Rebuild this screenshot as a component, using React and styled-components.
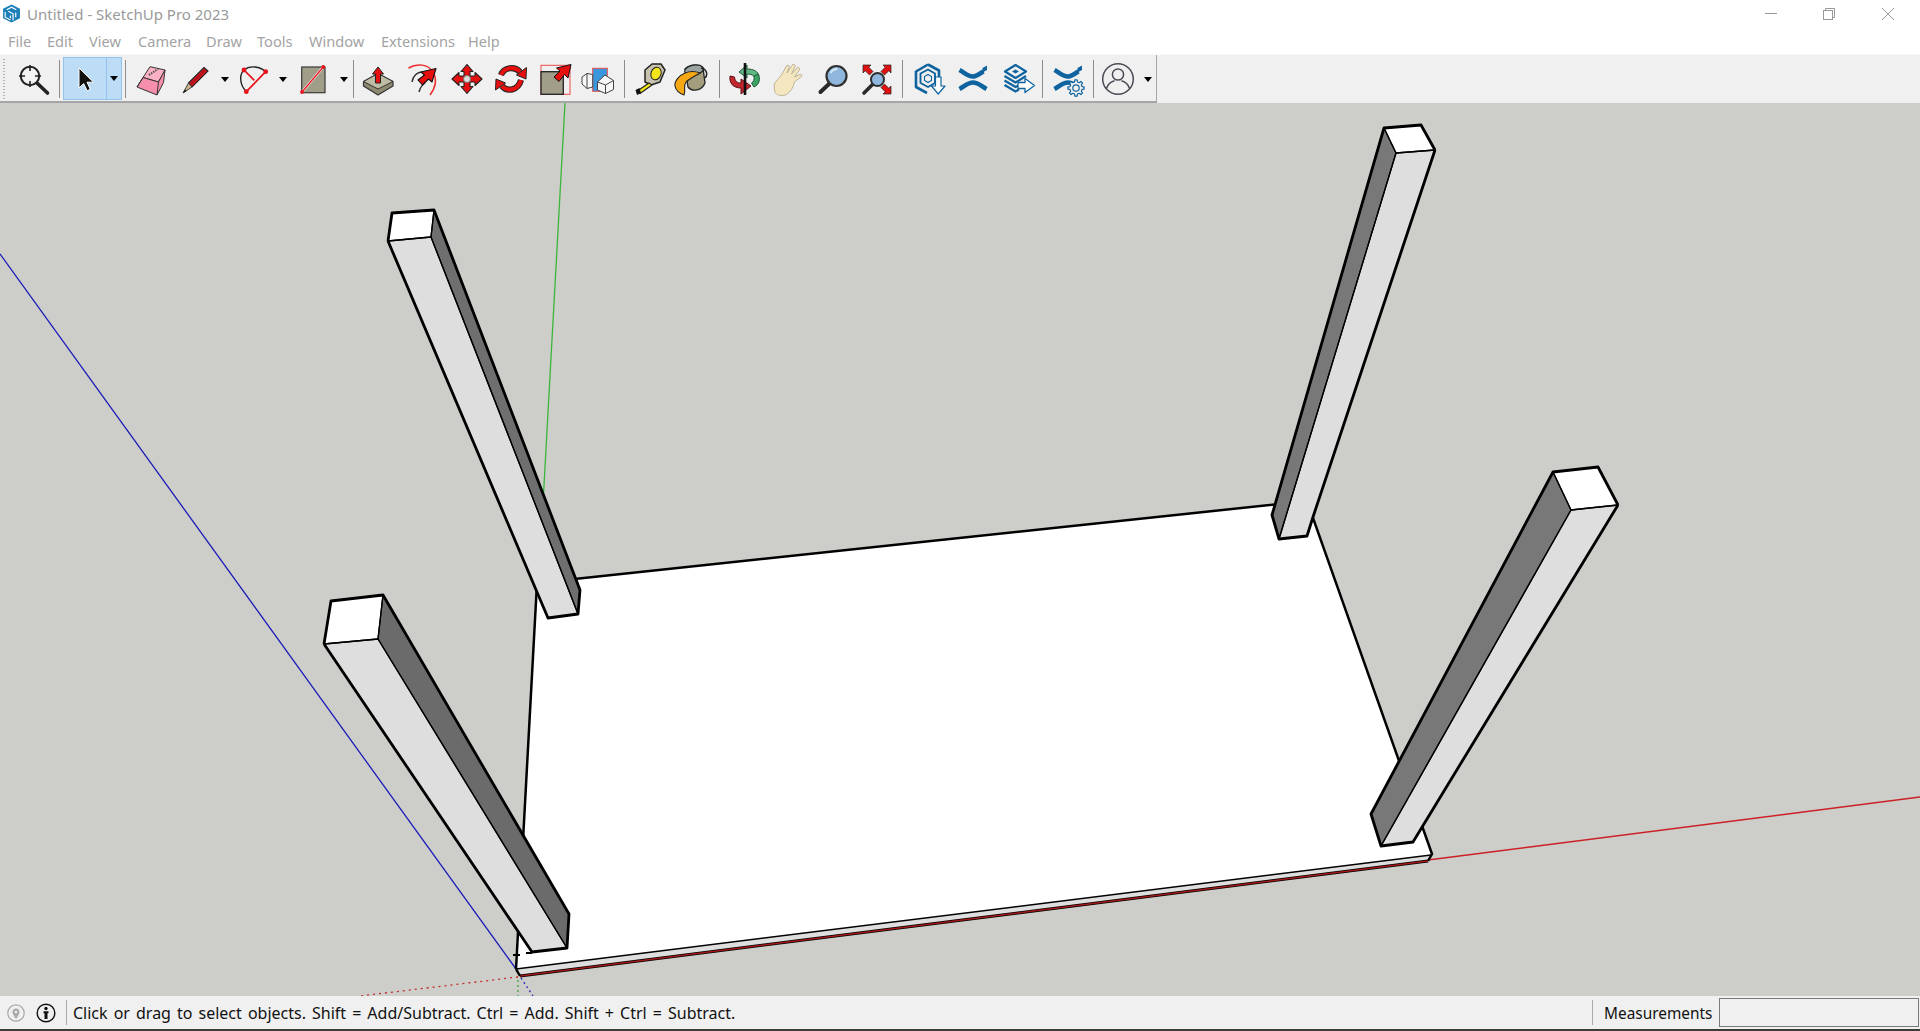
import React from "react";
import styled, { createGlobalStyle } from "styled-components";

const Global = createGlobalStyle`
  html, body { margin: 0; padding: 0; background: #f0f0f0; overflow: hidden; }
  #root { width: 1920px; height: 1031px; }
`;

const FONT = `"Noto Sans", "Open Sans", "Liberation Sans", sans-serif`;

const Shell = styled.div`
  width: 1920px; height: 1031px; display: flex; flex-direction: column;
  font-family: ${FONT}; overflow: hidden; background: #f0f0f0;
`;
const TitleBar = styled.header`
  height: 27px; background: #fff; display: flex; align-items: center; padding-left: 2px; flex: none;
`;
const TitleText = styled.span`
  margin-left: 6px; font-size: 15px; color: #9a9a9a; white-space: nowrap;
`;
const WindowControls = styled.div`
  margin-left: auto; display: flex; height: 27px; align-items: flex-start; padding-right: 3px;
`;
const WindowButton = styled.div`
  width: 58.5px; height: 27px; display: flex; justify-content: center; align-items: flex-start;
  padding-top: 8px; box-sizing: border-box;
`;
const MenuBar = styled.nav`
  height: 27px; background: #fff; display: flex; align-items: center; flex: none; padding: 1px 0 0 8px; box-sizing: border-box;
`;
const MenuItem = styled.span`
  width: ${p => p.$w}px; font-size: 14.6px; color: #a3a3a3; white-space: nowrap;
`;
const ToolRow = styled.div`
  height: 49px; flex: none; background: #f0f0f0; border-top: 1px solid #f8f8f8; box-sizing: border-box;
  display: flex;
`;
const Toolbar = styled.div`
  width: 1157px; height: 48px; display: flex; align-items: center; box-sizing: border-box; padding-top: 2px;
  border-right: 1px solid #a8a8a8; border-bottom: 2px solid #a5a5a5; background: #f0f0f0;
`;
const Grip = styled.div`
  width: 12px; height: 40px; flex: none; box-sizing: border-box; padding-left: 3px;
  &::before {
    content: ""; display: block; width: 2px; height: 40px;
    background: repeating-linear-gradient(to bottom, #b0b0b0 0 1px, transparent 1px 3px);
  }
`;
const Tool = styled.div`
  width: ${p => p.$w}px; height: 44px; flex: none; display: flex; align-items: center; justify-content: center;
`;
const SelectGroup = styled.div`
  width: 59px; height: 43px; flex: none; display: flex; box-sizing: border-box; align-self: flex-start;
  background: #bddcf5; border: 1px solid #91c3ec;
`;
const SelectTool = styled.div`
  width: 43px; display: flex; align-items: center; justify-content: center; border-right: 1px solid #91c3ec;
`;
const Caret = styled.div`
  width: ${p => p.$w}px; flex: none; display: flex; align-items: center; justify-content: center;
  &::before {
    content: ""; border-left: 4.5px solid transparent; border-right: 4.5px solid transparent; border-top: 5px solid #000;
  }
`;
const Sep = styled.div`
  width: 1px; height: 38px; flex: none; background: #8c8c8c;
  margin: 0 3px 0 ${p => 3 + (p.$extra || 0)}px;
`;
const Viewport = styled.main`
  flex: 1; min-height: 0; background: #cdcec9; display: block;
`;
const Scene = styled.svg`
  display: block; width: 1920px; height: 893px;
`;
const StatusBar = styled.footer`
  height: 35px; flex: none; background: #f0f0f0; display: flex; align-items: center; box-sizing: border-box;
  border-bottom: 2px solid #3c3c3c; padding-right: 1px;
`;
const StatusIcon = styled.div`
  width: ${p => p.$w}px; flex: none; display: flex; justify-content: center; align-items: center;
`;
const StatusSep = styled.div`
  width: 1px; height: 25px; flex: none; background: #aaa;
  margin: ${p => p.$m};
`;
const StatusText = styled.span`
  font-size: 16px; word-spacing: 1.9px; color: #111; white-space: nowrap; padding-top: 1px;
`;
const Measure = styled.span`
  margin-left: 11px; font-size: 15.4px; color: #111; white-space: nowrap; width: 115px; flex: none; padding-top: 1px;
`;
const MeasureBox = styled.div`
  width: 200px; height: 29px; flex: none; box-sizing: border-box; border: 1px solid #7a7a7a; background: #f0f0f0;
`;

const Ic = ({ children, s = 36 }) => (
  <svg width={s} height={s} viewBox="0 0 36 36" fill="none">{children}</svg>
);

const RED = "#e60f0f";
const BLUE = "#0f639f";

const IconLens = () => (
  <Ic>
    <circle cx="14" cy="15" r="9.2" stroke="#222" strokeWidth="2" fill="#f4f4f4" />
    <path d="M14 4v6M14 20v6M3 15h6M19 15h6" stroke="#222" strokeWidth="1.6" />
    <path d="M21.5 22.5 31.5 32" stroke="#222" strokeWidth="3.6" strokeLinecap="round" />
  </Ic>
);
const IconArrow = () => (
  <Ic>
    <path d="M12 7v20l4.7-4.4 3.4 7.2 3.2-1.5-3.3-7.1h6.5z" fill="#111" stroke="#fff" strokeWidth="1" />
  </Ic>
);
const IconEraser = () => (
  <Ic>
    <path d="M18 5.7 33 9 26.5 21 11 16.5z" fill="#fbb0c4" stroke="#333" strokeWidth="1" />
    <path d="M11 16.5 26.5 21 33 9 31.5 21.5 25 34 5 26z" fill="#f58fab" stroke="#333" strokeWidth="1" strokeLinejoin="round" />
    <path d="M11 16.5 5 26M26.5 21 25 34" stroke="#333" strokeWidth="1" />
    <path d="M17 14 26 8" stroke="#555" strokeWidth="2" strokeDasharray="1.5 1" />
  </Ic>
);
const IconPencil = () => (
  <Ic>
    <path d="M11.5 22 27 6.5l4 3.5L15 26z" fill="#d9161f" stroke="#222" strokeWidth="1.1" />
    <path d="M13 24 28.5 8.5" stroke="#a8101a" strokeWidth="1.6" />
    <path d="M11.5 22 15 26 6 32z" fill="#c9b48a" stroke="#333" strokeWidth=".9" />
    <path d="M6 32l2-3.5 1.6 1.4z" fill="#111" />
  </Ic>
);
const IconArc = () => (
  <Ic>
    <path d="M10.3 30.7C3 23 3.5 13 8 9c6-5 16-3.500 21.700 1.700" stroke="#222" strokeWidth="1.4" />
    <path d="M8 9 18.300 19.300M29.700 10.700 10.300 30.700" stroke="#e8141c" strokeWidth="1.700" />
    <circle cx="8" cy="9" r="2.400" fill="#e8141c" /><circle cx="29.700" cy="10.700" r="2.400" fill="#e8141c" /><circle cx="10.300" cy="30.700" r="2.400" fill="#e8141c" />
  </Ic>
);
const IconRect = () => (
  <Ic>
    <rect x="6.700" y="6" width="23.300" height="25.700" fill="#a09d88" stroke="#3a3a3a" strokeWidth="1.200" />
    <path d="M28.300 6 7 31" stroke="#fff" strokeWidth="2.600" />
    <path d="M28.300 6 7 31" stroke="#e8141c" strokeWidth="1.300" />
    <circle cx="28.300" cy="6" r="1.900" fill="#e8141c" /><circle cx="7" cy="31" r="1.900" fill="#e8141c" />
  </Ic>
);
const IconPush = () => (
  <Ic>
    <path d="M3.500 20.500 18 12.500 33 20.500 33 25 18 34 3.500 25z" fill="#8e8a72" stroke="#333" strokeWidth="1.200" strokeLinejoin="round" />
    <path d="M3.500 20.500 18 28 33 20.500 18 12.500z" fill="#bfbca6" stroke="#333" strokeWidth="1" strokeLinejoin="round" />
    <path d="M18 6 23.500 13H20.500V22H15.500V13H12.500z" fill={RED} stroke="#222" strokeWidth="1" strokeLinejoin="round" />
  </Ic>
);
const IconOffset = () => (
  <Ic>
    <path d="M3.500 7C12 2 23 3 28 11c4 7 3 15-3 23" stroke="#ee2a2a" strokeWidth="1.500" />
    <path d="M7 21c1-6 5-10 10-10M14 31c1-4 3-7 6-9" stroke="#333" strokeWidth="1.500" />
    <path d="M31 7.500 27 21 23.500 18 17.500 24 13 19 19.500 14 16 11z" fill={RED} stroke="#111" strokeWidth="1.100" strokeLinejoin="round" />
  </Ic>
);
const IconMove = () => (
  <Ic>
    <path d="M18 3.500 24 10.500H21V15H26V11.500L33 18 26 24.500V21H21V25.500H24L18 32.500 12 25.500H15V21H10V24.500L3 18 10 11.500V15H15V10.500H12z" fill={RED} stroke="#222" strokeWidth="1.100" strokeLinejoin="round" />
    <circle cx="18" cy="18" r="3.500" fill="#ddd" stroke="#777" strokeWidth="1" />
  </Ic>
);
const IconRotate = () => (
  <Ic>
    <path d="M8 14C11 6 22 5 27 11" stroke="#222" strokeWidth="6.200" />
    <path d="M28 19C25 30 14 31 9 25" stroke="#222" strokeWidth="6.200" />
    <path d="M8 14C11 6 22 5 27 11" stroke={RED} strokeWidth="4.200" />
    <path d="M28 19C25 30 14 31 9 25" stroke={RED} strokeWidth="4.200" />
    <path d="M33.500 6.500 33 18 23.500 14z" fill={RED} stroke="#222" strokeWidth="1" strokeLinejoin="round" />
    <path d="M2.500 29 3 18 12.500 22z" fill={RED} stroke="#222" strokeWidth="1" strokeLinejoin="round" />
  </Ic>
);
const IconScale = () => (
  <Ic>
    <rect x="4" y="4.300" width="29" height="29" stroke="#ef4a4a" strokeWidth="1" />
    <rect x="4" y="10.700" width="22.300" height="22.600" fill="#a09d88" stroke="#222" strokeWidth="1.300" />
    <path d="M34 3.500 31 17 27.500 13.500 22 20.500 17 16 23 10 19.500 7z" fill={RED} stroke="#111" strokeWidth="1" strokeLinejoin="round" />
  </Ic>
);
const IconSolid = () => (
  <Ic>
    <rect x="12.700" y="7.300" width="14.600" height="23" fill="#3a97dc" stroke="#ea4b4b" strokeWidth="1" />
    <path d="M2 16 7 12.500 12.700 13.500V26L7 27.500 2 23z" fill="#f8f8f8" stroke="#444" strokeWidth="1" strokeLinejoin="round" />
    <path d="M7 12.500V27.500" stroke="#444" strokeWidth="1" />
    <path d="M17.500 21 25 14 33.500 19.500V28.500L25.500 32.500 17.500 29z" fill="#f8f8f8" stroke="#444" strokeWidth="1" strokeLinejoin="round" />
    <path d="M17.500 21 25.500 24 33.500 19.500M25.500 24V32.500" stroke="#444" strokeWidth="1" />
  </Ic>
);
const IconTape = () => (
  <Ic>
    <path d="M13 9 20 3h9l4 6-5 12-9 3-6-3z" fill="#c7c3ae" stroke="#222" strokeWidth="1.500" strokeLinejoin="round" />
    <ellipse cx="24" cy="12.500" rx="5" ry="6.500" fill="#f2e51a" stroke="#222" strokeWidth="1" transform="rotate(20 24 12.500)" />
    <path d="M17 22 6 29.500 8 32.500 20 24z" fill="#f2e51a" stroke="#222" strokeWidth="1.200" strokeLinejoin="round" />
    <path d="M3.500 29 7.500 27 9 32 5 34z" fill="#111" />
  </Ic>
);
const IconPaint = () => (
  <Ic>
    <path d="M13 8C18 3 27 3 31 7L33 22C30 30 20 31 16 26z" fill="#a49e7e" stroke="#222" strokeWidth="1.300" />
    <ellipse cx="22" cy="9" rx="9.500" ry="5" fill="#9aa5a2" stroke="#222" strokeWidth="1.200" transform="rotate(-10 22 9)" />
    <path d="M13 12C8 14 2 20 3 25c1 5 6 8 9 9 2-5-1-9 2-13 3-3 9-6 14-9-5-2-10-2-15 0z" fill="#f5a811" stroke="#222" strokeWidth="1.100" strokeLinejoin="round" />
    <path d="M29 7C35 8 36 14 33 17" stroke="#222" strokeWidth="1.500" />
  </Ic>
);
const IconOrbit = () => (
  <Ic>
    <path d="M4 14C5 9 10 7 16 7L16 3 24 10 16 16V12C12 12 9 13 8 16z" fill="#62b884" stroke="#1d5a38" strokeWidth="1" strokeLinejoin="round" transform="matrix(-1 0 0 1 36 1)" />
    <path d="M3 15C2 22 6 27 14 27V33L24 25 14 18V22C10 22 8 20 7.500 16z" fill="#c1272d" stroke="#5a1316" strokeWidth="1" strokeLinejoin="round" />
    <path d="M31 13C34 18 32 24 27 26L24.500 22C26.500 21 27.500 19 27 15z" fill="#3aa364" stroke="#1d5a38" strokeWidth="1" strokeLinejoin="round" />
    <path d="M18 2V34" stroke="#111" strokeWidth="2.600" />
  </Ic>
);
const IconHand = () => (
  <Ic>
    <path d="M3 24C4 20 8 18 11 13L16 4l2.500 1-2.500 7 6-9 2.500 1.500-4 8.500 6.500-7 2 2-5.500 8 6-3 1.500 2-7.500 6c-1 5-4 10-8 12.500-4 2-9 1-11-1.500-1-2-1.500-4-1-6z" fill="#f4e6bf" stroke="#b8ae90" strokeWidth=".9" strokeLinejoin="round" />
  </Ic>
);
const IconZoom = () => (
  <Ic>
    <path d="M15 22 5.500 31" stroke="#2a2a2a" strokeWidth="4" strokeLinecap="round" />
    <circle cx="21.500" cy="15" r="10" fill="#8fb6dd" stroke="#2f2f2f" strokeWidth="2.200" />
    <path d="M15.500 12c1.500-3 4-4 7-4" stroke="#d5e6f6" strokeWidth="1.800" />
  </Ic>
);
const IconZoomExt = () => (
  <Ic>
    <path d="M14 23 5 32" stroke="#2a2a2a" strokeWidth="3.600" strokeLinecap="round" />
    <circle cx="18.500" cy="18.500" r="6.500" fill="#8fb6dd" stroke="#2f2f2f" strokeWidth="2" />
    <path d="M4 4H12L9.800 6.200 14 10.500 10.500 14 6.200 9.800 4 12zM32 4H24L26.200 6.200 22 10.500 25.500 14 29.800 9.800 32 12zM32 33H24L26.200 30.800 22 26.500 25.500 23 29.800 27.200 32 25z" fill="#e01010" stroke="#222" strokeWidth=".7" />
  </Ic>
);
const IconWarehouse = () => (
  <Ic>
    <path d="M18 3.500 29 9.500V18M17 32 6 26V10.500L18 3.500" stroke={BLUE} strokeWidth="2.600" strokeLinejoin="round" />
    <path d="M18 8.500 25 12.500V22L18 26 10.500 22V12.500z" stroke={BLUE} strokeWidth="1.900" strokeLinejoin="round" />
    <path d="M18 13.500 21.500 15.500V19.500L18 21.500 14.500 19.500V15.500z" stroke={BLUE} strokeWidth="1.100" />
    <path d="M25.500 16H31V25H35L28.200 33 21.500 25H25.500z" fill="#fff" stroke={BLUE} strokeWidth="1.200" strokeLinejoin="round" />
  </Ic>
);
const Chevrons = () => (
  <>
    <path d="M4.500 9C10 12 13 15.500 18 15.500 21 15.500 24 13 28.500 10.500" stroke={BLUE} strokeWidth="4.600" />
    <path d="M4.500 28C10 25 13 21.500 18 21.500 23 21.500 26 25 31.500 28" stroke={BLUE} strokeWidth="4.600" />
    <path d="M27.500 7 32 4.500V9L27.500 11.500z" fill={BLUE} />
  </>
);
const IconExt = () => <Ic><Chevrons /></Ic>;
const IconStack = () => (
  <Ic>
    <path d="M15.500 4 26 10.500 15.500 17 5 10.500z" stroke={BLUE} strokeWidth="2.200" strokeLinejoin="round" />
    <path d="M15.500 8.500 19 10.500 15.500 12.500 12 10.500z" fill={BLUE} />
    <path d="M4.500 15 15.500 21.500 26 15M4.500 19.500 15.500 26 21 23M4.500 24 15.500 30.500 19 28.500" stroke={BLUE} strokeWidth="2.200" />
    <path d="M18 21.500H25V17.500L34.500 24.500 25 31.500V27.500H18z" fill="#fff" stroke={BLUE} strokeWidth="1.300" strokeLinejoin="round" />
  </Ic>
);
const gearPath = (() => {
  const cx = 26, cy = 27, out = 8.2, inn = 6.2, n = 8;
  let d = "";
  for (let i = 0; i < n; i++) {
    const a = (i / n) * Math.PI * 2;
    const step = Math.PI / n;
    const p = (r, t) => `${(cx + r * Math.cos(t)).toFixed(2)} ${(cy + r * Math.sin(t)).toFixed(2)}`;
    d += `${i === 0 ? "M" : "L"}${p(inn, a - step * 0.6)}L${p(out, a - step * 0.35)}L${p(out, a + step * 0.35)}L${p(inn, a + step * 0.6)}`;
  }
  return d + "z";
})();
const IconSettings = () => (
  <Ic>
    <Chevrons />
    <path d={gearPath} fill="#f0f0f0" stroke={BLUE} strokeWidth="1.200" strokeLinejoin="round" />
    <circle cx="26" cy="27" r="3.200" fill="#f0f0f0" stroke={BLUE} strokeWidth="1.200" />
  </Ic>
);
const IconUser = () => (
  <Ic>
    <circle cx="18" cy="18" r="15.300" stroke="#4a4a55" strokeWidth="1.500" />
    <circle cx="18" cy="13.500" r="5.600" stroke="#4a4a55" strokeWidth="1.500" />
    <path d="M6.500 27.500C8 22.500 12 20.500 14.500 19.800M29.500 27.500C28 22.500 24 20.500 21.500 19.800" stroke="#4a4a55" strokeWidth="1.500" />
  </Ic>
);

const Logo = () => (
  <svg width="19" height="19" viewBox="0 0 18 18" fill="none">
    <path d="M1 4.500 9 .5l8 4v9l-8 4-8-4z" fill="#1c7fb8" />
    <path d="M4.500 5.500 9 3l4.500 2.500M3 7.500v5l5 2.700M6 6.800l4.500 2.500v6M13 8v4.500M8 11v2.500" stroke="#fff" strokeWidth="1.100" />
  </svg>
);

const C = ({ w, children }) => <Tool $w={w}>{children}</Tool>;

const pts = a => a.map(p => p.join(",")).join(" ");

const pillars = [
  { dark: "#6f6f6f", light: [[388, 241], [431, 237], [578, 614], [548, 618]], side: [[434, 210], [580, 590], [578, 614], [431, 237]], cap: [[392, 213], [434, 210], [431, 237], [388, 241]] },
  { dark: "#6b6b6b", light: [[324, 644], [378, 639], [567, 948], [532, 952]], side: [[383, 595], [569, 914], [567, 948], [378, 639]], cap: [[331, 601], [383, 595], [378, 639], [324, 644]] },
  { dark: "#787878", light: [[1396, 153], [1435, 150], [1313, 517], [1307, 536], [1279, 539]], side: [[1384, 128], [1396, 153], [1279, 539], [1272, 515]], cap: [[1384, 128], [1421, 125], [1435, 150], [1396, 153]] },
  { dark: "#787878", light: [[1571, 510], [1618, 505], [1413, 842], [1381, 846]], side: [[1553, 472], [1571, 510], [1381, 846], [1371, 814]], cap: [[1553, 472], [1598, 467], [1618, 505], [1571, 510]] },
];

const Model = () => (
  <Scene viewBox="0 103 1920 893">
    <line x1="0" y1="254" x2="516" y2="969" stroke="#1a1ab8" strokeWidth="1.300" />
    <line x1="565" y1="103" x2="541" y2="540" stroke="#3cb53c" strokeWidth="1.300" />
    <line x1="1428" y1="860" x2="1920" y2="797" stroke="#cc2026" strokeWidth="1.500" />
    <line x1="518" y1="977" x2="360" y2="996" stroke="#c22a2a" strokeWidth="1.300" strokeDasharray="2 4" />
    <line x1="518" y1="980" x2="518" y2="996" stroke="#3ca03c" strokeWidth="1.300" strokeDasharray="2 3" />
    <line x1="521" y1="978" x2="533" y2="996" stroke="#2a2ab8" strokeWidth="1.300" strokeDasharray="2 3" />

    <polygon points="537,583 1307,501 1432,854 1430,860 520,976 515,969" fill="#fff" />
    <polygon points="516,969 1431,855 1428,861 520,976" fill="#dedede" />
    <path d="M516 969 537 583 1307 501 1432 854 1428 861" stroke="#000" strokeWidth="2.500" strokeLinejoin="round" fill="none" />
    <line x1="516" y1="969" x2="1431" y2="855" stroke="#000" strokeWidth="1.500" />
    <line x1="520" y1="976" x2="1428" y2="861" stroke="#000" strokeWidth="3" />
    <line x1="520" y1="976" x2="1428" y2="861" stroke="#a01818" strokeWidth="1.500" />
    <path d="M516 969 520 976" stroke="#000" strokeWidth="2.500" />
    <path d="M513 955H520M526 953H532" stroke="#000" strokeWidth="2" />

    {pillars.map((p, i) => (
      <g key={i} strokeLinejoin="round">
        <polygon points={pts(p.light)} fill="#dedede" />
        <polygon points={pts(p.side)} fill={p.dark} />
        <polygon points={pts(p.cap)} fill="#fff" />
        <polygon points={pts(p.cap)} fill="none" stroke="#000" strokeWidth="1.300" />
        <polygon points={pts(p.side)} fill="none" stroke="#000" strokeWidth="1.300" />
        <polygon points={pts(p.light)} fill="none" stroke="#000" strokeWidth="1.300" />
        <polyline
          points={pts(i === 0
            ? [[388, 241], [392, 213], [434, 210], [580, 590], [578, 614], [548, 618], [388, 241]]
            : i === 1
            ? [[324, 644], [331, 601], [383, 595], [569, 914], [567, 948], [532, 952], [324, 644]]
            : i === 2
            ? [[1435, 150], [1421, 125], [1384, 128], [1272, 515], [1279, 539], [1307, 536], [1313, 517], [1435, 150]]
            : [[1618, 505], [1598, 467], [1553, 472], [1371, 814], [1381, 846], [1413, 842], [1618, 505]])}
          fill="none" stroke="#000" strokeWidth="2.800"
        />
      </g>
    ))}
  </Scene>
);

export default function App() {
  const menus = [["File", 39], ["Edit", 42], ["View", 49], ["Camera", 68], ["Draw", 51], ["Tools", 52], ["Window", 72], ["Extensions", 87], ["Help", 40]];
  return (
    <>
      <Global />
      <Shell>
        <TitleBar>
          <Logo />
          <TitleText>Untitled - SketchUp Pro 2023</TitleText>
          <WindowControls>
            <WindowButton>
              <svg width="12" height="12" viewBox="0 0 12 12"><path d="M0 5.500H12" stroke="#999" strokeWidth="1" /></svg>
            </WindowButton>
            <WindowButton>
              <svg width="12" height="12" viewBox="0 0 12 12" fill="none"><rect x=".5" y="2.500" width="9" height="9" stroke="#999" /><path d="M2.500 2.500V.5H11.500V9.500H9.500" stroke="#999" /></svg>
            </WindowButton>
            <WindowButton>
              <svg width="12" height="12" viewBox="0 0 12 12"><path d="M0 0 12 12M12 0 0 12" stroke="#999" strokeWidth="1" /></svg>
            </WindowButton>
          </WindowControls>
        </TitleBar>
        <MenuBar>
          {menus.map(([m, w]) => <MenuItem key={m} $w={w}>{m}</MenuItem>)}
        </MenuBar>
        <ToolRow>
          <Toolbar>
            <Grip />
            <C w={44}><IconLens /></C>
            <Sep />
            <SelectGroup>
              <SelectTool><IconArrow /></SelectTool>
              <Caret $w={14} />
            </SelectGroup>
            <Sep />
            <C w={42}><IconEraser /></C>
            <C w={48}><IconPencil /></C><Caret $w={12} />
            <C w={46}><IconArc /></C><Caret $w={12} />
            <C w={48}><IconRect /></C><Caret $w={13} />
            <Sep />
            <C w={42}><IconPush /></C>
            <C w={48}><IconOffset /></C>
            <C w={40}><IconMove /></C>
            <C w={48}><IconRotate /></C>
            <C w={40}><IconScale /></C>
            <C w={46}><IconSolid /></C>
            <Sep />
            <C w={44}><IconTape /></C>
            <C w={36}><IconPaint /></C>
            <Sep $extra={8} />
            <C w={44}><IconOrbit /></C>
            <C w={44}><IconHand /></C>
            <C w={44}><IconZoom /></C>
            <C w={44}><IconZoomExt /></C>
            <Sep />
            <C w={44}><IconWarehouse /></C>
            <C w={46}><IconExt /></C>
            <C w={43}><IconStack /></C>
            <Sep />
            <C w={44}><IconSettings /></C>
            <Sep />
            <C w={42}><IconUser /></C>
            <Caret $w={17} />
          </Toolbar>
        </ToolRow>
        <Viewport><Model /></Viewport>
        <StatusBar>
          <StatusIcon $w={32}>
            <svg width="18" height="20" viewBox="0 0 18 20" fill="none">
              <circle cx="9" cy="10" r="8.200" stroke="#aaa" strokeWidth="1.200" />
              <path d="M9 16c-2-3-3.500-5-3.500-7a3.500 3.500 0 0 1 7 0c0 2-1.500 4-3.500 7z" fill="#aaa" />
              <circle cx="9" cy="9" r="1.300" fill="#f0f0f0" />
            </svg>
          </StatusIcon>
          <StatusIcon $w={28}>
            <svg width="20" height="20" viewBox="0 0 20 20" fill="none">
              <circle cx="10" cy="10" r="8.800" stroke="#111" strokeWidth="1.400" />
              <circle cx="10" cy="5.500" r="1.700" fill="#111" />
              <path d="M7.500 8.300h5v2h-1V16H8.500v-5.700h-1z" fill="#111" />
            </svg>
          </StatusIcon>
          <StatusSep $m="0 6px 0 6px" />
          <StatusText>Click or drag to select objects. Shift = Add/Subtract. Ctrl = Add. Shift + Ctrl = Subtract.</StatusText>
          <StatusSep $m="0 0 0 auto" />
          <Measure>Measurements</Measure>
          <MeasureBox />
        </StatusBar>
      </Shell>
    </>
  );
}
